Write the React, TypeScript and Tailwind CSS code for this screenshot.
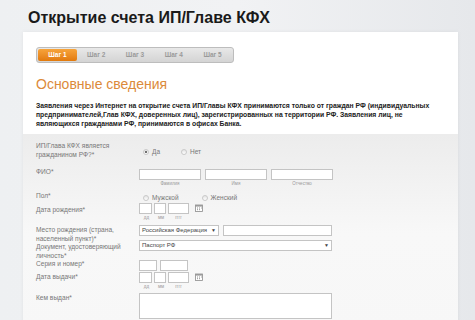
import React from "react";

const FONT = { fontFamily: '"Liberation Sans", Arial, sans-serif' };

const Radio = ({ checked, label }: { checked?: boolean; label: string }) => (
  <span className="inline-flex items-center gap-[3px]">
    <span className="relative w-[6px] h-[6px] rounded-full border border-[#c9c9c9] bg-gradient-to-b from-[#e4e4e4] to-white">
      {checked && <span className="absolute inset-[1px] rounded-full bg-[#444]" />}
    </span>
    <span className="text-[6.5px] text-[#777]">{label}</span>
  </span>
);

const Field = ({ w }: { w: string }) => (
  <div className={`h-[11px] border border-[#c4c4c4] bg-white ${w}`} />
);

const CalendarIcon = () => (
  <svg width="8" height="8" viewBox="0 0 8 8" className="ml-[4px] mt-[1px]">
    <rect x="0.5" y="1" width="7" height="6.5" fill="#fff" stroke="#8a8a8a" strokeWidth="0.8" />
    <rect x="0.5" y="1" width="7" height="1.6" fill="#9a9a9a" />
    <path d="M2 4h1M4 4h1M6 4h0.8M2 5.7h1M4 5.7h1" stroke="#777" strokeWidth="0.8" />
  </svg>
);

const DateInputs = () => (
  <div>
    <div className="flex items-start gap-[2px]">
      <Field w="w-[13px]" />
      <Field w="w-[12px]" />
      <Field w="w-[21px]" />
      <CalendarIcon />
    </div>
    <div className="flex text-[4.5px] text-[#999] mt-[1px] leading-[6px]">
      <span className="w-[15px] text-center">дд</span>
      <span className="w-[14px] text-center">мм</span>
      <span className="w-[21px] text-center">гггг</span>
    </div>
  </div>
);

const Label = ({ children, pt = "pt-0" }: { children: React.ReactNode; pt?: string }) => (
  <div className={`w-[103px] shrink-0 text-[6.6px] leading-[9px] text-[#777] ${pt}`}>{children}</div>
);

export default function App() {
  return (
    <div
      className="w-[475px] h-[320px] overflow-hidden bg-gradient-to-r from-[#eef0f2] via-[#f1f2f4] to-[#e6e8eb]"
      style={FONT}
    >
      <h1 className="pl-[28px] pt-[8px] h-[32px] text-[16px] font-bold text-[#1a1a1a] leading-[20px]">
        Открытие счета ИП/Главе КФХ
      </h1>
      <div className="ml-[23px] w-[435px] h-[300px] bg-white shadow-[0_0_4px_rgba(0,0,0,0.06)]">
        <div className="px-[13px] pt-[15px]">
          <div className="flex w-[198px] h-[16px] p-[1px] rounded-[3px] border border-[#bdbdbd] bg-gradient-to-b from-[#e8e8e8] to-[#d4d4d4]">
            <div className="w-[39px] flex items-center justify-center rounded-[2px] bg-gradient-to-b from-[#f7a43a] to-[#e27a0a] text-[6.5px] font-bold text-white">
              Шаг 1
            </div>
            {["Шаг 2", "Шаг 3", "Шаг 4", "Шаг 5"].map((t) => (
              <div key={t} className="w-[39px] flex items-center justify-center text-[6.5px] font-bold text-[#9a9a9a]">
                {t}
              </div>
            ))}
          </div>
          <h2 className="mt-[12px] text-[14px] leading-[18px] text-[#dc8a3a]">Основные сведения</h2>
          <p className="mt-[8px] text-[6.8px] leading-[9px] font-bold text-[#222]">
            Заявления через Интернет на открытие счета ИП/Главы КФХ принимаются только от граждан РФ (индивидуальных
            <br />
            предпринимателей,Глав КФХ, доверенных лиц), зарегистрированных на территории РФ. Заявления лиц, не
            <br />
            являющихся гражданами РФ, принимаются в офисах Банка.
          </p>
        </div>
        <div className="mt-[6px] px-[13px] pt-[7px] h-[200px] bg-gradient-to-b from-[#ececec] via-[#f8f8f8] to-[#f7f7f7]">
          <div className="flex h-[24px]">
            <Label>
              ИП/Глава КФХ является
              <br />
              гражданином РФ?*
            </Label>
            <div className="flex gap-[21px] pt-[6px] pl-[4px] h-fit items-center">
              <Radio checked label="Да" />
              <Radio label="Нет" />
            </div>
          </div>
          <div className="flex h-[24px]">
            <Label pt="pt-[2px]">ФИО*</Label>
            <div className="flex gap-[4px] pt-[4px]">
              {["Фамилия", "Имя", "Отчество"].map((s) => (
                <div key={s} className="w-[62px]">
                  <Field w="w-[62px]" />
                  <div className="text-[4.5px] text-[#999] text-center leading-[6px] mt-[1px]">{s}</div>
                </div>
              ))}
            </div>
          </div>
          <div className="flex h-[14px]">
            <Label pt="pt-[2px]">Пол*</Label>
            <div className="flex gap-[23px] pt-[4px] pl-[4px] h-fit items-center">
              <Radio label="Мужской" />
              <Radio label="Женский" />
            </div>
          </div>
          <div className="flex h-[20px]">
            <Label pt="pt-[2px]">Дата рождения*</Label>
            <DateInputs />
          </div>
          <div className="flex h-[16px]">
            <Label pt="pt-[2px]">
              Место рождения (страна,
              <br />
              населенный пункт)*
            </Label>
            <div className="flex gap-[4px] pt-[2px]">
              <div className="w-[80px] h-[11px] border border-[#c4c4c4] bg-white flex items-center justify-between px-[2px] text-[6px] text-[#444]">
                <span>Российская Федерация</span>
                <span className="text-[5px]">▼</span>
              </div>
              <Field w="w-[109px]" />
            </div>
          </div>
          <div className="flex h-[20px]">
            <Label pt="pt-[3px]">
              Документ, удостоверяющий
              <br />
              личность*
            </Label>
            <div className="pt-[1px]">
              <div className="w-[193px] h-[11px] border border-[#c4c4c4] bg-white flex items-center justify-between px-[2px] text-[6px] text-[#444]">
                <span>Паспорт РФ</span>
                <span className="text-[5px]">▼</span>
              </div>
            </div>
          </div>
          <div className="flex h-[11px]">
            <Label pt="pt-[0px]">Серия и номер*</Label>
            <div className="flex gap-[3px] pt-[1px]">
              <Field w="w-[18px]" />
              <Field w="w-[28px]" />
            </div>
          </div>
          <div className="flex h-[21px]">
            <Label pt="pt-[2px]">Дата выдачи*</Label>
            <div className="pt-[2px]">
              <DateInputs />
            </div>
          </div>
          <div className="flex">
            <Label pt="pt-[2px]">Кем выдан*</Label>
            <div className="pt-[2px]">
              <div className="w-[193px] h-[26px] border border-[#c4c4c4] bg-white" />
            </div>
          </div>
        </div>
      </div>
    </div>
  );
}
